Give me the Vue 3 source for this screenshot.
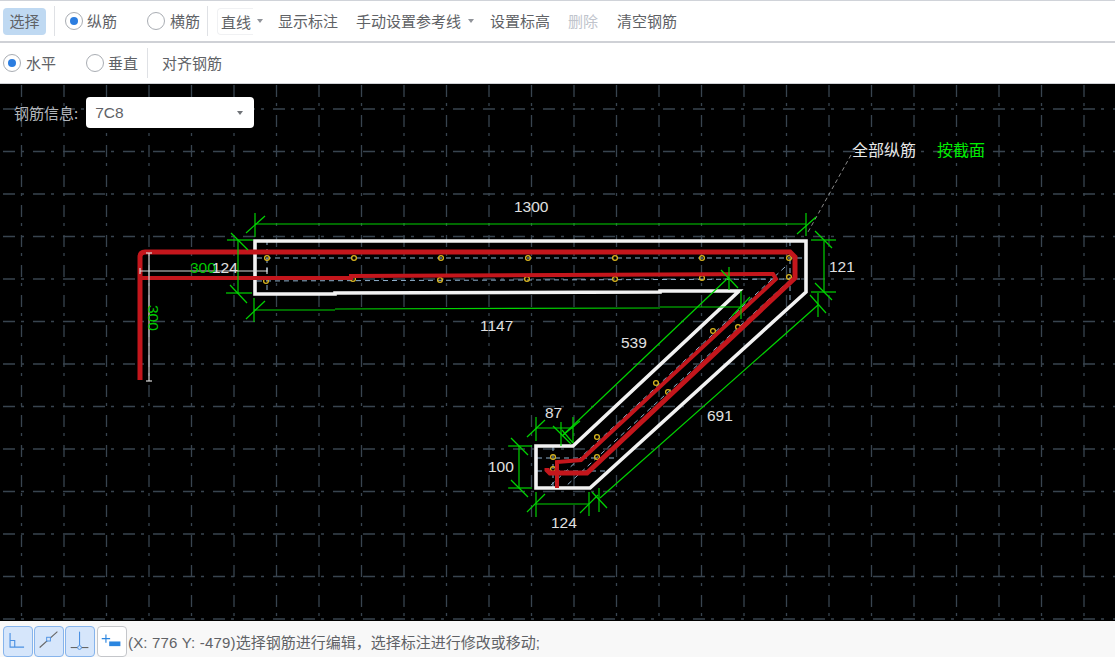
<script setup>
import { ref } from 'vue';

const mode = ref('long');
const dir = ref('h');

// drawing grid
const gridX = Array.from({ length: 26 }, (_, i) => 21.5 + i * 42.5);
const gridY = Array.from({ length: 13 }, (_, i) => 109 + i * 42.5);

// section outline / rebar paths, in page coordinates
const outline = 'M255,241 L806,241 L806,292 L590,488 L536,488 L536,446 L573,446 L739,291 L660,291 L660,292 L335,293 L335,294 L255,294 Z';
const barThick = 'M140,380 L140,257 Q140,252 145,252 L790,252 L795,257 L795,278 L587,473 L550,473 L547,470 L547,468';
const barThin = 'M140,278 L351,278 L351,276 L773,274 L776,279 L581,460 L557,462 L557,488';

const dashes = [
  [257, 258, 806, 258], [257, 281, 800, 279], [267, 240, 267, 292], [790, 241, 790, 300],
  [785, 267, 550, 486], [790, 280, 565, 487], [537, 458, 618, 458], [537, 471, 605, 471], [553, 446, 553, 488],
];

const dots = [
  [267, 258], [354, 258], [441, 258], [528, 258], [615, 258], [702, 258], [789, 258],
  [266, 281], [353, 279], [440, 280], [527, 279], [615, 279], [702, 278], [789, 277],
  [713, 331], [656, 383], [597, 437], [553, 457], [738, 327], [668, 392], [597, 457], [553, 469],
];

const dims = [
  // 1300
  [255, 224, 806, 224], [255, 213, 255, 237], [246, 233, 265, 216], [806, 213, 806, 236], [797, 234, 816, 217],
  // 124 left
  [238, 240, 238, 294], [227, 240, 253, 240], [226, 293, 252, 293], [231, 233, 248, 250], [230, 285, 247, 303],
  // 1147
  [254, 310, 335, 310], [335, 309, 660, 308], [660, 307, 741, 307], [254, 298, 254, 322], [246, 319, 265, 301],
  [741, 291, 741, 319], [732, 316, 750, 297],
  // 539
  [729, 277, 563, 435], [729, 267, 729, 290], [721, 270, 738, 288], [561, 422, 561, 446], [553, 426, 571, 444],
  // 87
  [536, 428, 573, 428], [536, 417, 536, 441], [527, 437, 545, 420], [573, 417, 573, 443], [562, 430, 573, 443], [562, 436, 580, 421],
  // 100
  [519, 446, 519, 488], [508, 446, 532, 446], [508, 488, 532, 488], [511, 438, 528, 455], [511, 480, 528, 497],
  // 124 bottom
  [536, 504, 589, 504], [536, 492, 536, 517], [589, 492, 589, 516], [527, 512, 545, 494], [580, 513, 598, 495],
  // 691
  [600, 498, 818, 305], [818, 293, 818, 317], [810, 295, 826, 313], [599, 488, 599, 512], [592, 492, 607, 508],
  // 121
  [824, 241, 824, 292], [811, 240, 836, 240], [811, 292, 836, 292], [815, 231, 832, 248], [815, 283, 832, 300],
];

const labels = [
  { x: 514, y: 212, t: '1300' },
  { x: 212, y: 273, t: '124' },
  { x: 480, y: 331, t: '1147' },
  { x: 621, y: 348, t: '539' },
  { x: 707, y: 421, t: '691' },
  { x: 545, y: 418, t: '87' },
  { x: 488, y: 472, t: '100' },
  { x: 551, y: 528, t: '124' },
  { x: 829, y: 272, t: '121' },
];
</script>

<template>
  <div class="page">
    <div class="bar bar-top">
      <button class="btn btn-active">选择</button>
      <span class="sep"></span>
      <label class="radio radio-first" @click="mode = 'long'">
        <span class="dot" :class="{ on: mode === 'long' }"></span>纵筋
      </label>
      <label class="radio radio-second" @click="mode = 'cross'">
        <span class="dot" :class="{ on: mode === 'cross' }"></span>横筋
      </label>
      <span class="sep sep-b"></span>
      <div class="drop">直线</div>
      <span class="caret"></span>
      <button class="btn plain show-btn">显示标注</button>
      <button class="btn plain ref-btn">手动设置参考线<span class="caret caret-in"></span></button>
      <button class="btn plain">设置标高</button>
      <button class="btn plain disabled del-btn">删除</button>
      <button class="btn plain">清空钢筋</button>
    </div>

    <div class="bar bar-second">
      <label class="radio radio-h" @click="dir = 'h'">
        <span class="dot" :class="{ on: dir === 'h' }"></span>水平
      </label>
      <label class="radio radio-second radio-v" @click="dir = 'v'">
        <span class="dot" :class="{ on: dir === 'v' }"></span>垂直
      </label>
      <span class="sep sep-c"></span>
      <button class="btn plain align-btn">对齐钢筋</button>
    </div>

    <div class="canvas">
      <svg class="drawing" viewBox="0 84 1115 537" width="1115" height="537">
        <g class="grid">
          <line v-for="x in gridX" :key="'x' + x" :x1="x" y1="85" :x2="x" y2="621" />
          <line v-for="y in gridY" :key="'y' + y" x1="3" :y1="y" x2="1115" :y2="y" />
        </g>

        <line x1="851" y1="155" x2="808" y2="232" class="leader" />

        <line v-for="(d, i) in dashes" :key="'d' + i" :x1="d[0]" :y1="d[1]" :x2="d[2]" :y2="d[3]" class="dash" />

        <path :d="outline" class="outline" />

        <circle v-for="(c, i) in dots" :key="'c' + i" :cx="c[0]" :cy="c[1]" r="2.4" class="rebar-dot" />

        <path :d="barThick" class="bar-thick" />
        <path :d="barThin" class="bar-thin" />

        <line v-for="(d, i) in dims" :key="'g' + i" :x1="d[0]" :y1="d[1]" :x2="d[2]" :y2="d[3]" class="dim" />

        <!-- white dimension of the 300 hook -->
        <g class="dim-white">
          <line x1="140" y1="271" x2="267" y2="271" />
          <line x1="149" y1="253" x2="149" y2="381" />
          <line x1="140" y1="268" x2="140" y2="274" />
          <line x1="267" y1="268" x2="267" y2="274" />
          <line x1="146" y1="253" x2="152" y2="253" />
          <line x1="146" y1="381" x2="152" y2="381" />
        </g>

        <text x="190" y="273" class="num num-green">300</text>
        <text x="0" y="0" class="num num-green" transform="translate(148 305) rotate(90)">300</text>
        <text v-for="l in labels" :key="l.t + l.x" :x="l.x" :y="l.y" class="num">{{ l.t }}</text>

        <text x="852" y="156" class="tag">全部纵筋</text>
        <text x="937" y="156" class="tag tag-green">按截面</text>
      </svg>

      <div class="rebar-info">
        <span class="info-label">钢筋信息:</span>
        <div class="combo">
          <span>7C8</span>
          <span class="caret combo-caret"></span>
        </div>
      </div>
    </div>

    <div class="status">
      <button class="tool on">
        <svg width="30" height="30" viewBox="0 0 30 30">
          <path d="M6.500 6.500V21.500H21.500M6.500 14.500H11.500V21.500" fill="none" stroke="#4a90e2" stroke-width="1.200" />
        </svg>
      </button>
      <button class="tool on">
        <svg width="30" height="30" viewBox="0 0 30 30">
          <path d="M5 22L24 5" stroke="#666" stroke-width="1.200" />
          <rect x="12.500" y="11" width="4" height="4" fill="#d6e6fb" stroke="#4a90e2" />
        </svg>
      </button>
      <button class="tool on">
        <svg width="30" height="30" viewBox="0 0 30 30">
          <path d="M14.500 5V20" stroke="#4a90e2" stroke-width="1.200" />
          <path d="M5 22H24" stroke="#666" stroke-width="1.200" />
          <circle cx="14.500" cy="22" r="2" fill="#d6e6fb" stroke="#4a90e2" />
        </svg>
      </button>
      <button class="tool tool-last">
        <svg width="30" height="30" viewBox="0 0 30 30">
          <path d="M8.500 8V17M4 12.500H13" stroke="#2b86e0" stroke-width="1.200" />
          <rect x="12" y="15.500" width="12" height="5" fill="#2b86e0" />
        </svg>
      </button>
      <span class="status-text"><span class="coords">(X: 776 Y: -479)</span>选择钢筋进行编辑&#xFF0C;选择标注进行修改或移动;</span>
    </div>
  </div>
</template>

<style>
html, body {
  margin: 0;
  padding: 0;
  background: #fff;
}
</style>

<style scoped>
.page {
  width: 1115px;
  height: 657px;
  display: flex;
  flex-direction: column;
  overflow: hidden;
  font-family: "Noto Sans CJK SC", "Liberation Sans", sans-serif;
  font-size: 15px;
  color: #606266;
}

.bar {
  box-sizing: border-box;
  background: #fff;
  display: flex;
  align-items: center;
  flex: none;
  white-space: nowrap;
}

.bar-top {
  height: 43px;
  border-top: 1px solid #d0d3d9;
  border-bottom: 2px solid #cfd1d6;
  padding-left: 3px;
}

.bar-second {
  height: 41px;
  border-bottom: 1px solid #cfd1d6;
  padding-left: 3px;
}

.btn {
  font: inherit;
  color: inherit;
  border: 0;
  background: none;
  padding: 0;
  line-height: 22px;
  display: flex;
  align-items: center;
}

.btn-active {
  width: 43px;
  height: 27px;
  justify-content: center;
  background: #bfd9f2;
  border-radius: 4px;
}

.plain {
  margin-right: 18px;
}

.show-btn {
  margin-left: 15px;
  margin-right: 18px;
}

.ref-btn {
  margin-right: 16px;
}

.del-btn {
  margin-right: 19px;
}

.disabled {
  color: #c0c4cc;
}

.sep {
  width: 1px;
  height: 30px;
  background: #dfe1e5;
  margin-left: 8px;
}

.sep-b {
  margin-left: 7px;
  margin-right: 9px;
}

.sep-c {
  margin-left: 8px;
  margin-right: 14px;
}

.radio {
  display: flex;
  align-items: center;
  gap: 5px;
  width: 82px;
  flex: none;
  line-height: 20px;
}

.radio-first {
  margin-left: 10px;
  gap: 4px;
}

.radio-h {
  width: 83px;
}

.radio-second {
  width: 53px;
}

.radio-v {
  gap: 4px;
}

.dot {
  box-sizing: border-box;
  width: 18px;
  height: 18px;
  border: 1px solid #a9adb3;
  border-radius: 50%;
  background: #fff;
  position: relative;
  flex: none;
}

.dot.on::after {
  content: "";
  position: absolute;
  left: 4px;
  top: 4px;
  width: 8px;
  height: 8px;
  border-radius: 50%;
  background: #2b7de0;
}

.drop {
  box-sizing: border-box;
  width: 36px;
  height: 27px;
  padding-left: 3px;
  line-height: 25px;
  border: 1px solid #f0f1f3;
  border-right: 0;
  border-radius: 4px 0 0 4px;
}

.caret {
  width: 0;
  height: 0;
  border-left: 3px solid transparent;
  border-right: 3px solid transparent;
  border-top: 4px solid #909399;
  margin-left: 4px;
}

.caret-in {
  margin-left: 7px;
}

.canvas {
  position: relative;
  flex: 1;
  background: #000;
  overflow: hidden;
}

.drawing {
  display: block;
}

.grid line {
  stroke: #38444f;
  stroke-width: 1.300;
  stroke-dasharray: 12 6 3 9;
}

.leader {
  stroke: #8a8a8a;
  stroke-width: 1;
  stroke-dasharray: 4 3;
}

.dash {
  stroke: #8fb0cc;
  stroke-width: 1;
  stroke-dasharray: 5 4;
}

.outline {
  fill: none;
  stroke: #f2f2f2;
  stroke-width: 3.600;
}

.rebar-dot {
  fill: none;
  stroke: #d8b51f;
  stroke-width: 1.300;
}

.bar-thick {
  fill: none;
  stroke: #c4161c;
  stroke-width: 5;
}

.bar-thin {
  fill: none;
  stroke: #c4161c;
  stroke-width: 4;
}

.dim {
  stroke: #00d400;
  stroke-width: 1.200;
}

.dim-white line {
  stroke: #d8d8d8;
  stroke-width: 1.200;
}

.num {
  font-family: "Liberation Sans", sans-serif;
  font-size: 15.500px;
  fill: #e0e0e0;
}

.num-green {
  fill: #00c800;
}

.tag {
  font-family: "Noto Sans CJK SC", sans-serif;
  font-size: 16px;
  fill: #e8e8e8;
}

.tag-green {
  fill: #00ee00;
}

.rebar-info {
  position: absolute;
  left: 14px;
  top: 13px;
  display: flex;
  align-items: center;
  gap: 8px;
}

.info-label {
  color: #b4b7bc;
  font-size: 15px;
}

.combo {
  box-sizing: border-box;
  width: 168px;
  height: 31px;
  background: #fff;
  border-radius: 4px;
  padding: 0 11px 0 9px;
  display: flex;
  align-items: center;
  justify-content: space-between;
  font-family: "Liberation Sans", sans-serif;
  font-size: 15.500px;
}

.combo-caret {
  margin-left: 0;
  border-top-color: #707378;
}

.status {
  flex: none;
  height: 36px;
  box-sizing: border-box;
  background: #f8f8f8;
  display: flex;
  align-items: center;
  padding: 4px 0 0 3px;
  gap: 1px;
}

.tool {
  box-sizing: border-box;
  width: 30px;
  height: 31px;
  padding: 0;
  background: #fff;
  border: 1px solid #c4c6ca;
  border-radius: 4px;
  display: flex;
  align-items: center;
  justify-content: center;
}

.tool.on {
  background: #d6e6fb;
  border-color: #86b4ec;
}

.tool-last {
  margin-left: 1px;
}

.status-text {
  font-family: "Liberation Sans", "Noto Sans CJK SC", sans-serif;
  font-size: 15px;
  white-space: nowrap;
}

.coords {
  letter-spacing: 0.180px;
}
</style>
